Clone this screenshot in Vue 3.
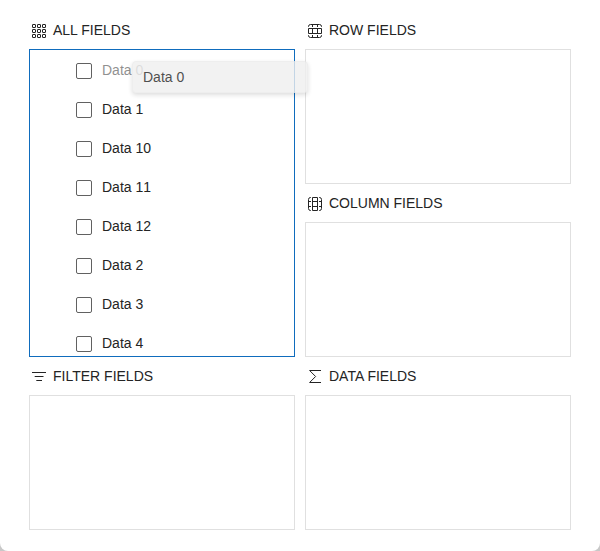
<script setup>
const fields = ['Data 0', 'Data 1', 'Data 10', 'Data 11', 'Data 12', 'Data 2', 'Data 3', 'Data 4']
const cells = [0, 5, 10]
</script>

<template>
  <div class="backdrop">
    <main class="chooser">
      <div class="column">
        <section class="area all">
          <header class="heading">
            <svg class="icon" viewBox="0 0 14 14">
              <template v-for="y in cells" :key="y">
                <rect v-for="x in cells" :key="x" :x="x + 0.5" :y="y + 0.5" width="3" height="3" rx="0.3" />
              </template>
            </svg>
            <span>ALL FIELDS</span>
          </header>
          <div class="box source">
            <label v-for="(name, i) in fields" :key="name" class="field" :class="{ dragged: i === 0 }">
              <span class="check"></span>
              <span class="name">{{ name }}</span>
            </label>
          </div>
        </section>
        <section class="area">
          <header class="heading">
            <svg class="icon" viewBox="0 0 14 14">
              <path d="M0 2.5H14M2.7 6.5H11.5M4.3 10.5H10" />
            </svg>
            <span>FILTER FIELDS</span>
          </header>
          <div class="box"></div>
        </section>
      </div>
      <div class="column">
        <section class="area">
          <header class="heading">
            <svg class="icon" viewBox="0 0 14 14">
              <path d="M0.5 4.5H13.5V9.5H0.5ZM4.5 4.5V9.5M9.5 4.5V9.5M0.5 3V2.5A2 2 0 0 1 2.5 0.5H11.5A2 2 0 0 1 13.5 2.5V3M4.5 0.5V3M9.5 0.5V3M0.5 11V11.5A2 2 0 0 0 2.5 13.5H11.5A2 2 0 0 0 13.5 11.5V11M4.5 13.5V11M9.5 13.5V11" />
            </svg>
            <span>ROW FIELDS</span>
          </header>
          <div class="box"></div>
        </section>
        <section class="area">
          <header class="heading">
            <svg class="icon" viewBox="0 0 14 14">
              <path d="M4.5 0.5V13.5H9.5V0.5ZM4.5 4.5H9.5M4.5 9.5H9.5M3 0.5H2.5A2 2 0 0 0 0.5 2.5V11.5A2 2 0 0 0 2.5 13.5H3M0.5 4.5H3M0.5 9.5H3M11 0.5H11.5A2 2 0 0 1 13.5 2.5V11.5A2 2 0 0 1 11.5 13.5H11M13.5 4.5H11M13.5 9.5H11" />
            </svg>
            <span>COLUMN FIELDS</span>
          </header>
          <div class="box"></div>
        </section>
        <section class="area">
          <header class="heading">
            <svg class="icon" viewBox="0 0 14 14">
              <path d="M13 0.5H1.6L7.6 6.5L1.6 12.5H13" />
            </svg>
            <span>DATA FIELDS</span>
          </header>
          <div class="box"></div>
        </section>
      </div>
      <div class="ghost">Data 0</div>
    </main>
  </div>
</template>

<style>
body {
  margin: 0;
}
</style>

<style scoped>
.backdrop {
  height: 551px;
  background: #c8c8c8;
  overflow: hidden;
}
.chooser {
  position: relative;
  box-sizing: border-box;
  display: flex;
  gap: 10px;
  height: 551px;
  padding: 11px 29px 21px;
  background: #fff;
  border-radius: 0 0 8px 8px;
  color: #242424;
  font: 14px/20px "Liberation Sans", Arial, sans-serif;
}
.column {
  display: flex;
  flex-direction: column;
  width: 266px;
}
.area {
  display: flex;
  flex-direction: column;
  height: 173px;
}
.area.all {
  height: 346px;
}
.heading {
  display: flex;
  align-items: center;
  gap: 7px;
  height: 38px;
  padding-left: 3px;
}
.icon {
  width: 14px;
  height: 14px;
  margin-top: 2px;
  fill: none;
  stroke: #242424;
  stroke-width: 1;
}
.box {
  box-sizing: border-box;
  flex: 1;
  min-height: 0;
  border: 1px solid #e0e0e0;
  overflow: hidden;
}
.source {
  border-color: #0f6cbd;
}
.field {
  box-sizing: border-box;
  display: flex;
  align-items: flex-start;
  gap: 10px;
  height: 39px;
  padding: 10px 0 0 46px;
}
.name {
  font-kerning: none;
}
.check {
  box-sizing: border-box;
  width: 16px;
  height: 16px;
  margin-top: 3px;
  border: 1px solid #616161;
  border-radius: 2px;
}
.dragged .name {
  opacity: 0.5;
}
.ghost {
  position: absolute;
  left: 132px;
  top: 61px;
  box-sizing: border-box;
  width: 176px;
  height: 32px;
  padding: 5px 10px;
  border: 1px solid #ebebeb;
  border-radius: 4px;
  background: #f0f0f0;
  box-shadow: 0 2px 4px rgba(0, 0, 0, 0.16);
  opacity: 0.8;
}
</style>
